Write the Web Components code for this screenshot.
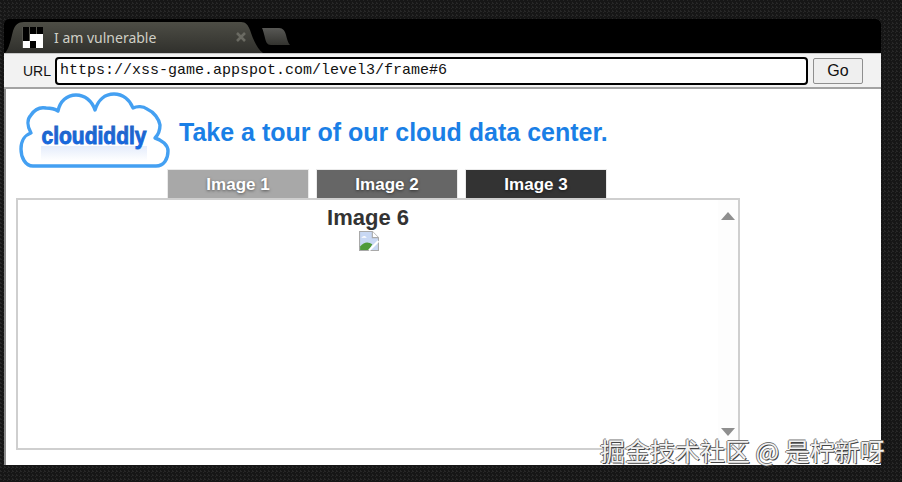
<!DOCTYPE html>
<html>
<head>
<meta charset="utf-8">
<title>I am vulnerable</title>
<style>
html,body{margin:0;height:100%;}
body{
	width:902px;height:482px;overflow:hidden;box-sizing:border-box;
	padding:19px 21px 17px 4px;
	background-color:#161616;
	background-image:
		linear-gradient(45deg,#272727 25%,transparent 25%,transparent 75%,#272727 75%);
	background-size:4px 4px;
	font-family:"Liberation Sans",Arial,sans-serif;
}
</style>
</head>
<body>
<browser-window>
	<browser-tabs slot="tabs" title-text="I am vulnerable"></browser-tabs>
	<url-bar slot="url" value="https://xss-game.appspot.com/level3/frame#6"></url-bar>
	<site-header>Take a tour of our cloud data center.</site-header>
	<image-tabs></image-tabs>
	<image-frame heading="Image 6"></image-frame>
</browser-window>
<water-mark>掘金技术社区 @ 是柠新呀</water-mark>

<script>
'use strict';

class BrowserWindow extends HTMLElement {
	constructor(){
		super();
		this.attachShadow({mode:'open'});
		this.shadowRoot.innerHTML = `
<style>
:host{display:flex;flex-direction:column;width:877px;height:446px;background:#000;border-radius:6px 6px 0 0;overflow:hidden;}
main{flex:1;background:#fff;border-left:2px solid #8c8c8c;display:flex;flex-direction:column;margin-left:0;}
</style>
<slot name="tabs"></slot>
<slot name="url"></slot>
<main><slot></slot></main>`;
	}
}

class BrowserTabs extends HTMLElement {
	constructor(){
		super();
		this.attachShadow({mode:'open'});
	}
	connectedCallback(){
		let title = this.getAttribute('title-text');
		this.shadowRoot.innerHTML = `
<style>
:host{display:flex;align-items:flex-end;height:34px;padding-left:1px;background:#000;}
.tab{
	width:258px;height:32px;box-sizing:border-box;display:flex;align-items:center;
	padding:0 16px 0 17px;color:#cfcfc6;
	background:linear-gradient(#4e4e46,#30302c);
	clip-path:path('M0 32 C4 28 6 18 8 10 C10 4 13 1 19 1 L236 1 C241 1 243 4 245 9 C248 18 252 28 258 32 Z');
	font:14px "Noto Sans","Open Sans",sans-serif;
}
.fav{flex:none;width:21px;height:21px;margin-right:11px;display:block;}
.name{flex:1;white-space:nowrap;}
.close{flex:none;width:12px;height:12px;display:block;}
.newtab{display:block;width:32px;height:19px;margin:0 0 7px -3px;}
</style>
<div class="tab">
	<svg class="fav" viewBox="0 0 21 21">
		<rect width="21" height="21" fill="#55554e"/>
		<rect x="1" y="0" width="6" height="7" fill="#000"/>
		<rect x="8" y="0" width="6" height="7" fill="#000"/>
		<rect x="15" y="0" width="6" height="7" fill="#000"/>
		<rect x="1" y="7" width="6" height="7" fill="#000"/>
		<rect x="8" y="7" width="13" height="7" fill="#fff"/>
		<rect x="1" y="14" width="7" height="7" fill="#fff"/>
		<rect x="8" y="14" width="6" height="7" fill="#000"/>
		<rect x="14" y="14" width="7" height="7" fill="#fff"/>
	</svg>
	<span class="name">${title}</span>
	<svg class="close" viewBox="0 0 12 12"><path d="M2 2 L10 10 M10 2 L2 10" stroke="#6a6a62" stroke-width="2.6"/></svg>
</div>
<svg class="newtab" viewBox="0 0 32 19">
	<defs><linearGradient id="n" x1="0" y1="0" x2="0" y2="1"><stop offset="0" stop-color="#585855"/><stop offset="1" stop-color="#33332f"/></linearGradient></defs>
	<path d="M2 1 L19 1 C23 1 25 4 26 8 C27 12 28 16 30 18 L11 18 C7 18 6 15 5 11 C4 7 3 3 2 1 Z" fill="url(#n)"/>
</svg>`;
	}
}

class UrlBar extends HTMLElement {
	constructor(){
		super();
		this.attachShadow({mode:'open'});
	}
	connectedCallback(){
		this.shadowRoot.innerHTML = `
<style>
:host{display:flex;align-items:center;height:36px;box-sizing:border-box;padding:0 18px 0 19px;background:#f2f2f2;border-top:1px solid #c8c8c8;border-bottom:2px solid #a3a3a3;color:#111;font:14px "Liberation Sans",Arial,sans-serif;}
.label{width:32px;flex:none;}
.field{flex:none;width:753px;height:28px;box-sizing:border-box;border:2px solid #000;border-radius:4px;background:#fff;padding:0 3px;display:flex;align-items:center;font:15px "Liberation Mono","Courier New",monospace;white-space:nowrap;overflow:hidden;}
button{flex:none;width:50px;height:26px;margin-left:5px;padding:0;border:1px solid #8f8f8f;border-radius:2px;background:#efefef;color:#111;font:16px "Liberation Sans",Arial,sans-serif;}
</style>
<span class="label">URL</span>
<div class="field">${this.getAttribute('value')}</div>
<button>Go</button>`;
	}
}

class SiteHeader extends HTMLElement {
	constructor(){
		super();
		this.attachShadow({mode:'open'});
		this.shadowRoot.innerHTML = `
<style>
:host{display:flex;align-items:center;height:80px;padding:0 0 0 13px;flex:none;}
svg{display:block;flex:none;width:152px;height:80px;}
h1{margin:0 0 0 8px;font:bold 25px "Liberation Sans",Arial,sans-serif;color:#1a7fe6;white-space:nowrap;position:relative;top:3px;}
</style>
<svg viewBox="0 1 152 80">
	<defs>
		<linearGradient id="t" x1="0" y1="0" x2="0" y2="1"><stop offset="0" stop-color="#2f62b4"/><stop offset="1" stop-color="#0a6cf6"/></linearGradient>
		<linearGradient id="f" x1="0" y1="0" x2="0" y2="1"><stop offset="0" stop-color="#e4ecfb"/><stop offset="1" stop-color="#fff"/></linearGradient>
	</defs>
	<rect x="22" y="58" width="106" height="15" fill="url(#f)"/>
	<path d="M14 78 C6 78 2 69 2 61 C2 53 6 47 12 45 C8 38 8 31 12 27 C16 21 22 19 27 20 C31 20 36 21 39 23 C41 13 48 7 57 7 C66 7 73 13 76 22 C79 12 86 6 95 6 C104 6 111 12 114 20 C118 18 124 18 128 21 C135 24 140 31 141 37 C141 43 139 47 136 50 C143 52 149 57 149 63 C149 71 145 78 137 78 Z" fill="none" stroke="#44a0f2" stroke-width="3.4" stroke-linejoin="round"/>
	<text x="75" y="56" text-anchor="middle" font-family="Liberation Sans, Arial, sans-serif" font-weight="bold" font-size="23" textLength="105" lengthAdjust="spacingAndGlyphs" fill="url(#t)" stroke="#1a66d0" stroke-width=".9">cloudiddly</text>
</svg>
<h1><slot></slot></h1>`;
	}
}

class ImageTabs extends HTMLElement {
	constructor(){
		super();
		this.attachShadow({mode:'open'});
		let tabs = [['Image 1','#a8a8a8'],['Image 2','#666'],['Image 3','#333']];
		this.shadowRoot.innerHTML = `
<style>
:host{display:flex;height:29px;padding-left:161px;gap:7px;flex:none;}
div{width:142px;height:29px;box-sizing:border-box;padding-top:2px;border:solid #eaeaea;border-width:1px 1px 0 1px;display:flex;align-items:center;justify-content:center;color:#fff;font:bold 17px "Liberation Sans",Arial,sans-serif;text-shadow:0 1px 3px rgba(0,0,0,.5);background-clip:padding-box;}
</style>
${tabs.map(t=>{return `<div style="background-color:${t[1]}">${t[0]}</div>`;}).join('')}`;
	}
}

class ImageFrame extends HTMLElement {
	constructor(){
		super();
		this.attachShadow({mode:'open'});
	}
	connectedCallback(){
		this.shadowRoot.innerHTML = `
<style>
:host{display:grid;grid-template-columns:1fr 20px;width:724px;height:252px;box-sizing:border-box;margin-left:10px;border:2px solid #cfcfcf;flex:none;}
.body{text-align:center;}
h2{margin:5px 0 0;font:bold 22px/25px "Liberation Sans",Arial,sans-serif;color:#333;}
svg.broken{display:block;width:20px;height:20px;margin:1px 0 0 calc(50% - 9px);}
.bar{display:flex;flex-direction:column;justify-content:space-between;align-items:center;padding:12px 0 12px 0;background:#fdfdfd;}
.bar svg{display:block;width:14px;height:8px;}
</style>
<div class="body">
	<h2>${this.getAttribute('heading')}</h2>
	<svg class="broken" viewBox="0 0 18 18">
		<path d="M.5 .5 H12 L17.5 6 V17.5 H.5 Z" fill="#c8d8f4" stroke="#a9a9a9"/>
		<path d="M12 .5 V6 H17.5" fill="#fff" stroke="#a9a9a9"/>
		<path d="M2 6 q3 -3 5 0 z" fill="#fff"/>
		<path d="M1 17 V14 Q6 8 12 12 L9 17 Z" fill="#4f9a3a"/>
		<path d="M9 17.5 L17.5 9" stroke="#fff" stroke-width="2"/>
	</svg>
</div>
<div class="bar">
	<svg viewBox="0 0 14 8"><path d="M7 0 L14 8 H0 Z" fill="#8e8e8e"/></svg>
	<svg viewBox="0 0 14 8"><path d="M0 0 H14 L7 8 Z" fill="#8e8e8e"/></svg>
</div>`;
	}
}

class WaterMark extends HTMLElement {
	constructor(){
		super();
		this.attachShadow({mode:'open'});
		this.shadowRoot.innerHTML = `
<style>
:host{position:absolute;left:600px;top:435px;font:25px/30px "Noto Sans CJK SC","Noto Sans",sans-serif;color:#f2f2f2;white-space:nowrap;text-shadow:1px 1px 0 #444,-1px 0 0 #777,0 -1px 0 #777;}
</style>
<slot></slot>`;
	}
}

customElements.define('browser-window',BrowserWindow);
customElements.define('browser-tabs',BrowserTabs);
customElements.define('url-bar',UrlBar);
customElements.define('site-header',SiteHeader);
customElements.define('image-tabs',ImageTabs);
customElements.define('image-frame',ImageFrame);
customElements.define('water-mark',WaterMark);
</script>
</body>
</html>
